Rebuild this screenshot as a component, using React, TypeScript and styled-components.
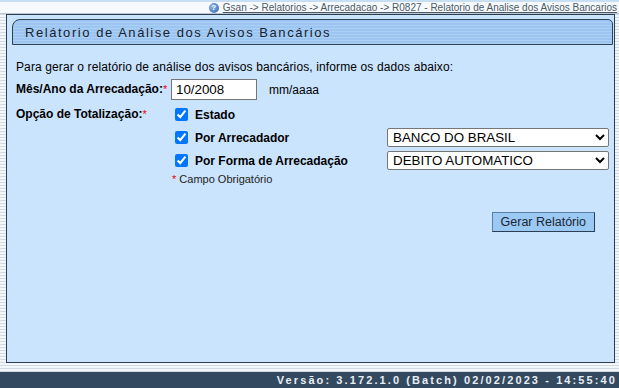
import React from 'react';
import styled, { createGlobalStyle } from 'styled-components';

const GlobalStyle = createGlobalStyle`
  html, body {
    margin: 0;
    padding: 0;
  }
  body {
    font-family: "Liberation Sans", Arial, sans-serif;
    background: repeating-linear-gradient(#f3f7fa 0 2px, #cfdae5 2px 3px);
  }
`;

const Page = styled.div`
  width: 619px;
  height: 388px;
  display: flex;
  flex-direction: column;
  overflow: hidden;
`;

const TopBar = styled.div`
  height: 11px;
  border-top: 2px solid #c7def3;
  border-bottom: 1px solid #b9c8d6;
  background: #f7fafc;
  display: flex;
  justify-content: flex-end;
  align-items: center;
  padding-right: 2px;
`;

const HelpIcon = styled.span`
  width: 10px;
  height: 10px;
  border-radius: 50%;
  background: radial-gradient(circle at 35% 35%, #8fb6e8, #2d62b0);
  color: #fff;
  font-size: 8px;
  font-weight: bold;
  line-height: 10px;
  text-align: center;
  margin-right: 4px;
`;

const Crumbs = styled.a`
  font-size: 10px;
  color: #4d5a66;
  text-decoration: underline;
  line-height: 11px;
  white-space: nowrap;
`;

const Main = styled.div`
  flex: 1;
  padding: 0 4px 0 6px;
  display: flex;
  flex-direction: column;
`;

const Panel = styled.div`
  flex: 1;
  background: #cbe4fd;
  border: 1px solid #2c3d50;
  padding: 4px 1px 0 5px;
  display: flex;
  flex-direction: column;
`;

const TitleBox = styled.div`
  height: 24px;
  border: 1px solid #2f4254;
  border-radius: 8px 5px 0 0;
  background: repeating-linear-gradient(#9cc6f1 0 2px, #accff4 2px 3px);
  display: flex;
  align-items: center;
  padding-left: 12px;
  font-size: 13px;
  letter-spacing: 1.55px;
  color: #16222e;
`;

const Content = styled.div`
  padding: 15px 0 0 4px;
  font-size: 12px;
  color: #000;
`;

const Intro = styled.div`
  line-height: 14px;
  margin-bottom: 4px;
  letter-spacing: 0.12px;
`;

const FormGrid = styled.div`
  display: grid;
  grid-template-columns: 155px auto;
  align-items: start;
`;

const Label = styled.div<{ $pad?: number }>`
  font-weight: bold;
  line-height: 14px;
  padding-top: ${(p) => p.$pad ?? 0}px;
`;

const Req = styled.span`
  color: #e00;
  font-weight: normal;
  font-size: 11px;
  vertical-align: top;
`;

const Field = styled.div`
  display: flex;
  align-items: center;
  height: 23px;
  gap: 12px;
`;

const TextInput = styled.input`
  width: 86px;
  height: 21px;
  box-sizing: border-box;
  border: 1px solid #767676;
  font-family: "Liberation Sans", Arial, sans-serif;
  font-size: 13.33px;
  padding: 1px 4px;
  margin: 0;
`;

const Hint = styled.span`
  font-size: 12px;
`;

const Options = styled.div`
  display: flex;
  flex-direction: column;
  padding-top: 2px;
`;

const OptionRow = styled.div`
  display: grid;
  grid-template-columns: 216px 222px;
  align-items: center;
  height: 23px;
`;

const CheckLabel = styled.label`
  display: flex;
  align-items: center;
  font-weight: bold;
  gap: 4px;
  input {
    margin: 0 3px 0 4px;
    width: 13px;
    height: 13px;
    accent-color: #0075ff;
  }
`;

const Select = styled.select`
  width: 222px;
  height: 19px;
  border: 1px solid #767676;
  border-radius: 2px;
  background: #fff;
  font-family: "Liberation Sans", Arial, sans-serif;
  font-size: 13.33px;
  padding: 0 1px;
  margin: 0;
  color: #000;
`;

const Note = styled.div`
  padding-left: 1px;
  font-size: 11px;
  line-height: 14px;
  margin-top: 0;
  color: #222;
`;

const Actions = styled.div`
  display: flex;
  justify-content: flex-end;
  padding: 26px 18px 0 0;
`;

const Button = styled.button`
  height: 20px;
  padding: 0 8px;
  background: #9cc9f4;
  border: 1px solid #2b3f54;
  border-top-color: #5b7ea3;
  border-left-color: #5b7ea3;
  font-family: "Liberation Sans", Arial, sans-serif;
  font-size: 12.5px;
  color: #1b2633;
  border-radius: 0;
`;

const Spacer = styled.div`
  height: 9px;
`;

const Footer = styled.div`
  height: 16px;
  background: #334960;
  display: flex;
  align-items: center;
  justify-content: flex-end;
  padding-right: 2px;
  color: #e9eef3;
  font-weight: bold;
  font-size: 11px;
  letter-spacing: 2.1px;
`;

export default function App() {
  return (
    <Page>
      <GlobalStyle />
      <TopBar>
        <HelpIcon>?</HelpIcon>
        <Crumbs>
          Gsan -&gt; Relatorios -&gt; Arrecadacao -&gt; R0827 - Relatorio de Analise dos Avisos Bancarios
        </Crumbs>
      </TopBar>
      <Main>
        <Panel>
          <TitleBox>Relátorio de Análise dos Avisos Bancários</TitleBox>
          <Content>
            <Intro>Para gerar o relatório de análise dos avisos bancários, informe os dados abaixo:</Intro>
            <FormGrid>
              <Label $pad={4}>
                Mês/Ano da Arrecadação:<Req>*</Req>
              </Label>
              <Field>
                <TextInput defaultValue="10/2008" />
                <Hint>mm/aaaa</Hint>
              </Field>
              <Label $pad={6}>
                Opção de Totalização:<Req>*</Req>
              </Label>
              <Options>
                <OptionRow>
                  <CheckLabel>
                    <input type="checkbox" defaultChecked />
                    Estado
                  </CheckLabel>
                </OptionRow>
                <OptionRow>
                  <CheckLabel>
                    <input type="checkbox" defaultChecked />
                    Por Arrecadador
                  </CheckLabel>
                  <Select defaultValue="bb">
                    <option value="bb">BANCO DO BRASIL</option>
                  </Select>
                </OptionRow>
                <OptionRow>
                  <CheckLabel>
                    <input type="checkbox" defaultChecked />
                    Por Forma de Arrecadação
                  </CheckLabel>
                  <Select defaultValue="da">
                    <option value="da">DEBITO AUTOMATICO</option>
                  </Select>
                </OptionRow>
                <Note>
                  <Req>*</Req> Campo Obrigatório
                </Note>
              </Options>
            </FormGrid>
            <Actions>
              <Button>Gerar Relatório</Button>
            </Actions>
          </Content>
        </Panel>
      </Main>
      <Spacer />
      <Footer>Versão: 3.172.1.0 (Batch) 02/02/2023 - 14:55:40</Footer>
    </Page>
  );
}
